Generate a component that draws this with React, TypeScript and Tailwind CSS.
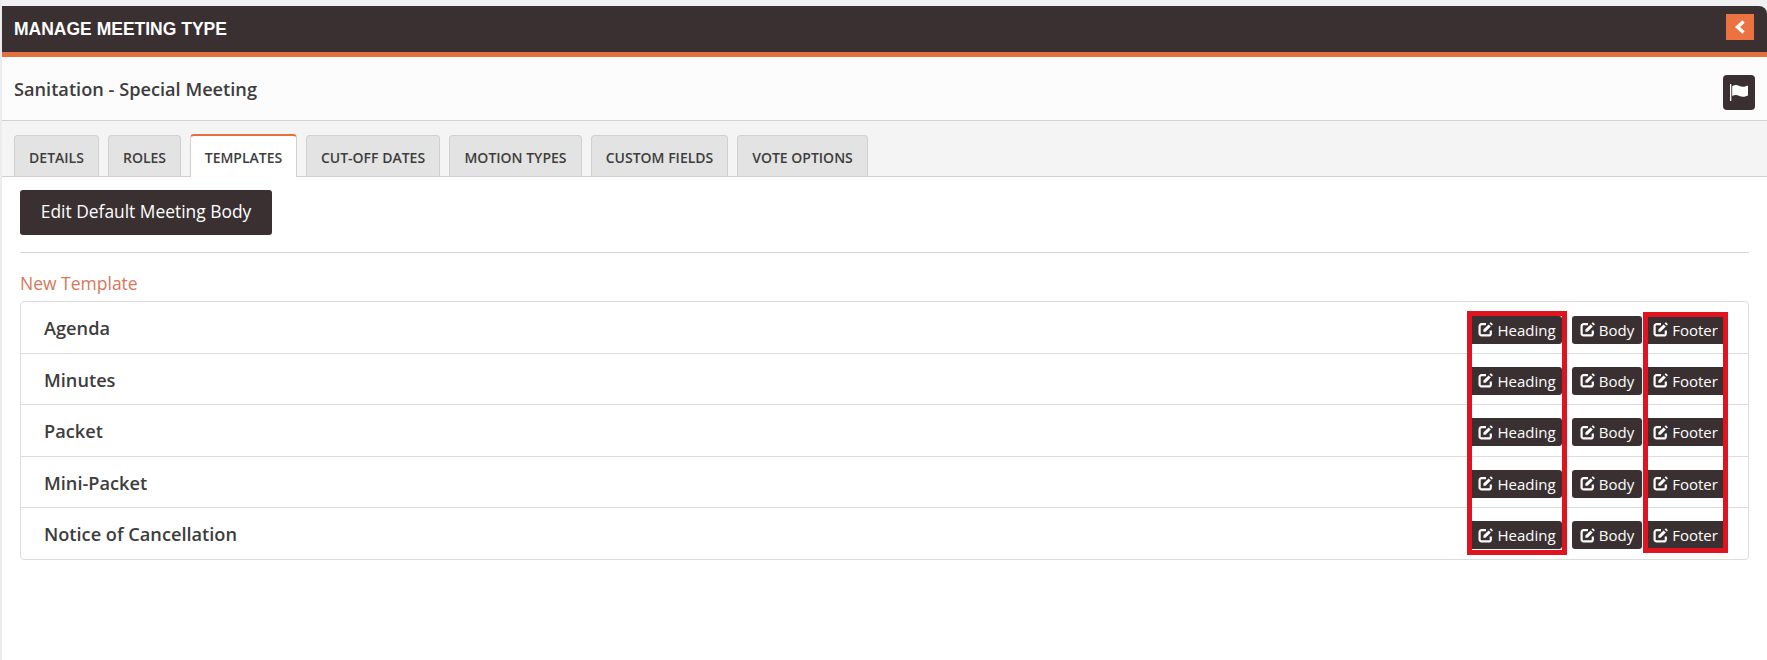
const TABS = [
  { label: "DETAILS", width: "w-[85px]" },
  { label: "ROLES", width: "w-[73px]" },
  { label: "TEMPLATES", width: "w-[107px]", active: true },
  { label: "CUT-OFF DATES", width: "w-[134px]" },
  { label: "MOTION TYPES", width: "w-[133px]" },
  { label: "CUSTOM FIELDS", width: "w-[137px]" },
  { label: "VOTE OPTIONS", width: "w-[131px]" },
];

const ROWS = ["Agenda", "Minutes", "Packet", "Mini-Packet", "Notice of Cancellation"];

function EditIcon() {
  return (
    <svg width="16" height="15" viewBox="0 0 16 15" fill="none" className="shrink-0">
      <path d="M8 2.2H3.6A2 2 0 0 0 1.6 4.2v7.2a2 2 0 0 0 2 2h7.2a2 2 0 0 0 2-2V8.4" stroke="white" strokeWidth="2.2" />
      <path d="M5.4 7.6 10.6 2.4l2.2 2.2-5.2 5.2H5.4z" fill="white" />
      <path d="M11.6 1.4l.8-.8a.6.6 0 0 1 .8 0l1.4 1.4a.6.6 0 0 1 0 .8l-.8.8z" fill="white" />
    </svg>
  );
}

function FlagIcon() {
  return (
    <svg width="19" height="17" viewBox="0 0 19 17" className="shrink-0">
      <rect x="0" y="0" width="1.3" height="17" fill="white" />
      <path d="M2.2 2.2C5 .6 7 .9 9.4 2c2.4 1.1 4.5 1.2 8.6-.4v10c-4 1.7-6.2 1.5-8.6.4-2.4-1.1-4.4-1.4-7.2.1z" fill="white" />
    </svg>
  );
}

function EditButton({ label, className }: { label: string; className: string }) {
  return (
    <span className={`flex h-[28px] items-center justify-center gap-[3px] bg-[#3a3031] text-[15px] text-white ${className}`}>
      <EditIcon />
      {label}
    </span>
  );
}

export default function App() {
  return (
    <div className="h-[660px] overflow-hidden border-l-2 border-[#ececec] bg-[#f1f1f3] pt-[6px] font-['Open_Sans',sans-serif] text-[#3d3d3d]">
      {/* Header bar */}
      <div className="flex h-[51px] items-start justify-between rounded-tr-lg border-b-[5px] border-[#e3703f] bg-[#3a3031] pl-[12px] pr-[13px]">
        <h1 className="mt-[13px] font-['Liberation_Sans',sans-serif] text-[17.5px] leading-[20px] font-bold text-white">
          MANAGE MEETING TYPE
        </h1>
        <button className="mt-[8px] flex h-[26px] w-[28px] items-center justify-center bg-[#ec7341] text-white">
          <svg width="12" height="14" viewBox="0 0 12 14">
            <path d="M9.5 1.5 3.5 7l6 5.5" fill="none" stroke="white" strokeWidth="3.4" />
          </svg>
        </button>
      </div>

      {/* Title */}
      <div className="flex h-[64px] items-center justify-between border-b border-[#d0d0d0] bg-[#fcfcfc] pl-[12px] pr-[12px]">
        <span className="mt-[2px] text-[18.2px] font-semibold">Sanitation - Special Meeting</span>
        <button className="mt-[7px] flex h-[35px] w-[32px] items-center justify-center rounded-[4px] bg-[#3a3031] text-white">
          <FlagIcon />
        </button>
      </div>

      {/* Tabs */}
      <div className="flex h-[56px] items-end gap-[9px] border-b border-[#d0d0d0] bg-[#f4f4f4] pl-[12px]">
        {TABS.map((tab) => (
          <div
            key={tab.label}
            className={
              tab.active
                ? `-mb-px flex h-[43px] items-center justify-center rounded-t-[4px] border-x border-t-2 border-x-[#d0d0d0] border-t-[#e3703f] bg-white pt-[2px] text-[14px] font-semibold ${tab.width}`
                : `flex h-[41px] items-center justify-center rounded-t-[4px] border-x border-t border-[#d0d0d0] bg-[#e3e3e3] pt-[2px] text-[14px] font-semibold ${tab.width}`
            }
          >
            {tab.label}
          </div>
        ))}
      </div>

      {/* Body */}
      <div className="h-full bg-white pt-[13px] pl-[18px] pr-[18px]">
        <button className="flex h-[45px] w-[252px] items-center justify-center rounded-[3px] bg-[#3a3031] pb-[2px] text-[17.4px] text-white">
          Edit Default Meeting Body
        </button>
        <hr className="mt-[17px] border-[#d5d5d5]" />
        <div className="mt-[18px] text-[17.5px] leading-[24px] text-[#d8775a]">New Template</div>

        <div className="relative mt-[6px] rounded-[4px] border border-[#dcdcdc]">
          {ROWS.map((row, i) => (
            <div
              key={row}
              className={`flex items-center justify-between pl-[23px] pr-[25px] ${i > 0 ? "h-[51.5px] border-t border-[#dcdcdc]" : "h-[50.5px]"}`}
            >
              <span className="mt-[3px] text-[18.2px] font-semibold">{row}</span>
              <div className={`flex gap-[10px] ${i > 0 ? "mt-[4px]" : "mt-[5px]"}`}>
                <EditButton label="Heading" className="w-[90px] rounded-r-[3px]" />
                <div className="flex gap-[6px]">
                  <EditButton label="Body" className="w-[70px] rounded-[3px]" />
                  <EditButton label="Footer" className="w-[75px]" />
                </div>
              </div>
            </div>
          ))}
          {/* Red highlight boxes drawn on top of the screenshot */}
          <div className="absolute top-[9px] right-[181px] h-[244px] w-[100px] border-[5px] border-[#e0141f]" />
          <div className="absolute top-[10px] right-[20px] h-[241px] w-[85px] border-[5px] border-[#e0141f]" />
        </div>
      </div>
    </div>
  );
}
